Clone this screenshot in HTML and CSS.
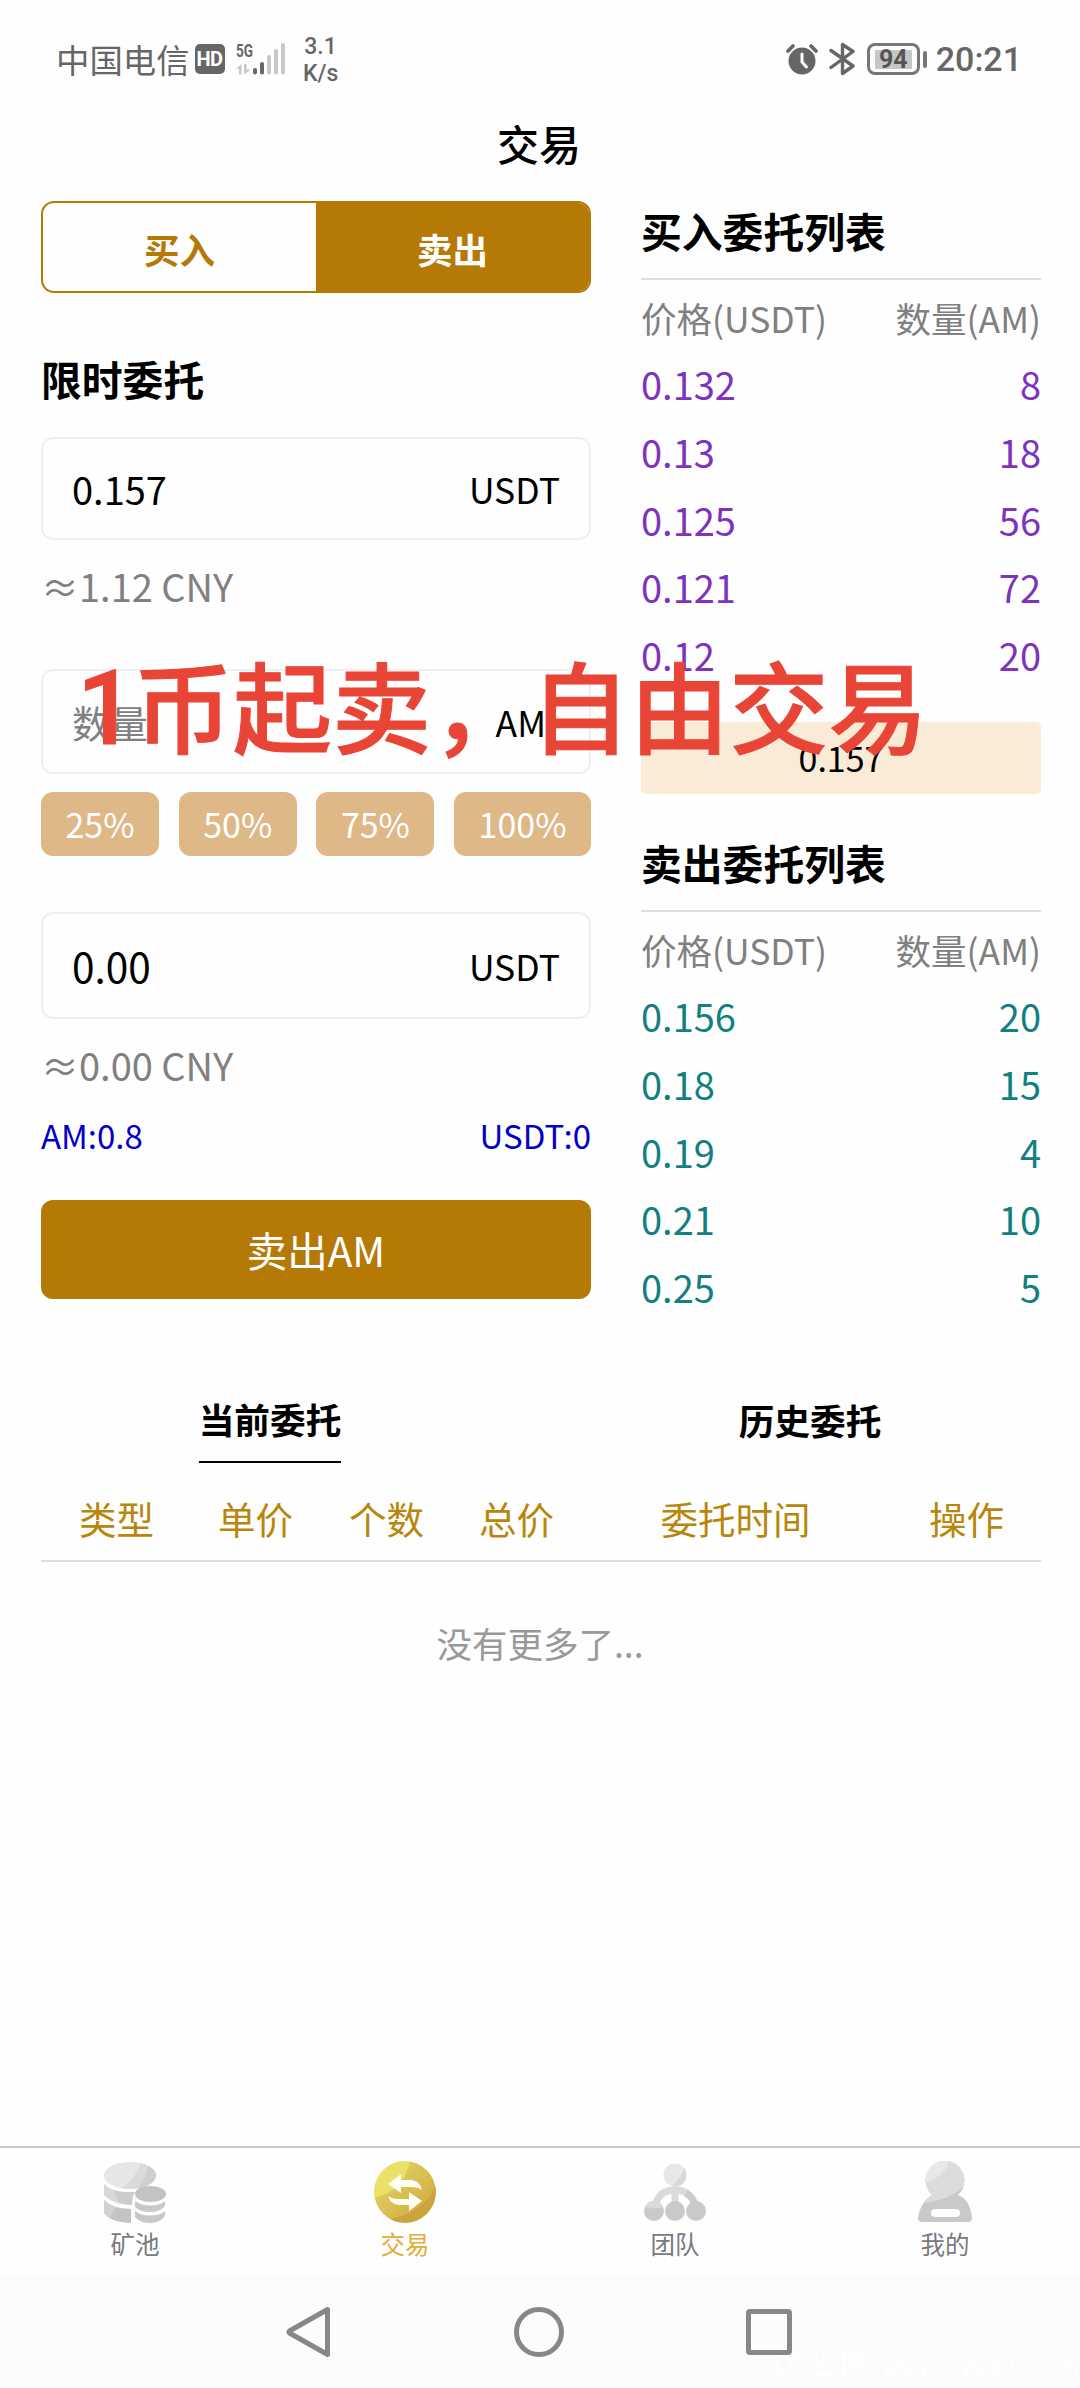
FILE: index.html
```html
<!DOCTYPE html>
<html lang="zh-CN">
<head>
<meta charset="utf-8">
<title>交易</title>
<link rel="stylesheet" href="styles.css">
</head>
<body>
<div class="page">
  <header class="status">
    <div class="status-left">
      <span class="carrier">中国电信</span>
      <span class="hd">HD</span>
      <svg class="signal" width="50" height="32" viewBox="0 0 50 32">
        <text class="signal-5g" x="0" y="14" textLength="17" lengthAdjust="spacingAndGlyphs">5G</text>
        <g fill="#c8c8c8">
          <path d="M0 26l5.500-5v10.500h-2.500v-5.500zM8 21h2.500v5.500h4.500l-7 5z"/>
          <rect x="31" y="12" width="4" height="19.500" rx="2"/>
          <rect x="38" y="6" width="4" height="25.500" rx="2"/>
          <rect x="45" y="0" width="4" height="31.500" rx="2"/>
        </g>
        <g fill="#666">
          <rect x="17" y="25" width="4" height="6.500" rx="2"/>
          <rect x="24" y="19" width="4" height="12.500" rx="2"/>
        </g>
      </svg>
      <span class="speed">3.1<br>K/s</span>
    </div>
    <div class="status-right">
      <svg width="32" height="32" viewBox="0 0 32 32">
        <circle cx="16" cy="18" r="13.500" fill="#666"/>
        <path d="M2 8l5-5M30 8l-5-5" stroke="#666" stroke-width="3.600" stroke-linecap="round"/>
        <path d="M16 11v8l4.500 5" fill="none" stroke="#fff" stroke-width="3" stroke-linecap="round"/>
      </svg>
      <svg class="bluetooth" width="26" height="34" viewBox="0 0 26 34">
        <path d="M2 8.500L24 24L13.500 31.500V2.500L24 9.500L2 25.500" fill="none" stroke="#666" stroke-width="3.400" stroke-linejoin="round" stroke-linecap="round"/>
      </svg>
      <div class="battery"><span>94</span></div>
      <span class="battery-cap"></span>
      <span class="clock">20:21</span>
    </div>
  </header>

  <h1 class="title">交易</h1>

  <main class="trade">
    <section class="order">
      <div class="side-toggle">
        <button class="side">买入</button>
        <button class="side side-active">卖出</button>
      </div>
      <h2 class="order-title">限时委托</h2>
      <div class="field field-price"><span class="field-value">0.157</span><span>USDT</span></div>
      <p class="approx">≈1.12 CNY</p>
      <div class="field field-amount"><span class="field-hint">数量</span><span>AM</span></div>
      <div class="chips">
        <button class="chip">25%</button>
        <button class="chip">50%</button>
        <button class="chip">75%</button>
        <button class="chip">100%</button>
      </div>
      <div class="field field-total"><span class="field-sum">0.00</span><span>USDT</span></div>
      <p class="approx">≈0.00 CNY</p>
      <div class="balances"><span>AM:0.8</span><span>USDT:0</span></div>
      <button class="submit">卖出AM</button>
    </section>

    <section class="books">
      <div class="book book-buy">
        <h2 class="book-title">买入委托列表</h2>
        <div class="book-head"><span>价格(USDT)</span><span>数量(AM)</span></div>
        <div class="book-row"><span>0.132</span><span>8</span></div>
        <div class="book-row"><span>0.13</span><span>18</span></div>
        <div class="book-row"><span>0.125</span><span>56</span></div>
        <div class="book-row"><span>0.121</span><span>72</span></div>
        <div class="book-row"><span>0.12</span><span>20</span></div>
      </div>
      <div class="last-price">0.157</div>
      <div class="book book-sell">
        <h2 class="book-title">卖出委托列表</h2>
        <div class="book-head"><span>价格(USDT)</span><span>数量(AM)</span></div>
        <div class="book-row"><span>0.156</span><span>20</span></div>
        <div class="book-row"><span>0.18</span><span>15</span></div>
        <div class="book-row"><span>0.19</span><span>4</span></div>
        <div class="book-row"><span>0.21</span><span>10</span></div>
        <div class="book-row"><span>0.25</span><span>5</span></div>
      </div>
    </section>
  </main>

  <section class="records">
    <div class="record-tabs">
      <span class="record-tab record-tab-active">当前委托</span>
      <span class="record-tab record-tab-history">历史委托</span>
    </div>
    <div class="record-head">
      <span>类型</span><span>单价</span><span>个数</span><span>总价</span><span>委托时间</span><span>操作</span>
    </div>
    <p class="empty">没有更多了...</p>
  </section>

  <nav class="tabbar">
    <a class="tab">
      <svg width="62" height="62" viewBox="0 0 62 62">
        <defs>
          <clipPath id="coin-top"><ellipse cx="26" cy="14.500" rx="26" ry="13.500"/></clipPath>
        </defs>
        <g clip-path="url(#coin-top)">
          <rect width="62" height="30" fill="#e6e6e6"/>
          <path d="M37 0Q33 17 15 30H62V0z" fill="#dadada"/>
          <path d="M45 0Q43 16 32 30H62V0z" fill="#cfcfcf"/>
        </g>
        <path d="M0 23Q8 31.500 26 31.500L31 31Q28 34 28 44Q8 43 0 34z" fill="#d8d8d8"/>
        <path d="M10 29Q16 31.500 31 31Q28 34 28 44Q20 43.500 15 42z" fill="#ccc"/>
        <path d="M0 39Q8 47.500 27 48V62Q6 61 0 52z" fill="#c4c4c4"/>
        <path d="M0 39Q5 44 12 46L6 57Q1 54 0 52z" fill="#d2d2d2"/>
        <ellipse cx="46.500" cy="33" rx="15.500" ry="8" fill="#c3c3c3"/>
        <path d="M31 40Q37 44.500 46 44.500Q56 44.500 61 40V45Q56 51 46 51Q36 51 31 46zM31 50Q37 54.500 46 54.500Q56 54.500 61 50V55Q56 62 46 62Q36 62 31 56z" fill="#c8c8c8"/>
      </svg>
      <span>矿池</span>
    </a>
    <a class="tab tab-active">
      <svg width="62" height="62" viewBox="0 0 62 62">
        <defs>
          <linearGradient id="gold" x1="0" y1="0" x2="1" y2="1">
            <stop offset="0" stop-color="#e4d966"/><stop offset="1" stop-color="#cca63e"/>
          </linearGradient>
          <clipPath id="gold-disc"><circle cx="31" cy="31" r="30.800"/></clipPath>
        </defs>
        <g clip-path="url(#gold-disc)">
          <rect width="62" height="62" fill="url(#gold)"/>
          <path d="M0 0H36Q29 31 0 37z" fill="#eae168"/>
          <path d="M62 22Q54 50 16 58L22 62H62z" fill="#cda43c"/>
        </g>
        <path d="M14 23L27 13V19H37Q46 20 48 29Q44 26 37 26H27V32zM48 40L35 50V44H25Q16 43 14 35Q18 38 25 38H35V31z" fill="#fffef2"/>
      </svg>
      <span>交易</span>
    </a>
    <a class="tab">
      <svg width="62" height="62" viewBox="0 0 62 62">
        <defs><clipPath id="team-head"><circle cx="31" cy="14" r="11.500"/></clipPath></defs>
        <path d="M11 46Q14 29 31 29Q47 29 52 46M31 26V46" fill="none" stroke="#dadada" stroke-width="7"/>
        <path d="M42 32Q49 36 52 46" fill="none" stroke="#cbcbcb" stroke-width="7"/>
        <g clip-path="url(#team-head)">
          <rect x="19" y="2" width="24" height="24" fill="#e7e7e7"/>
          <path d="M41 4Q38 18 26 26H43z" fill="#d8d8d8"/>
        </g>
        <g fill="#c9c9c9"><circle cx="10" cy="50" r="10"/><circle cx="31" cy="50" r="10"/><circle cx="52" cy="50" r="10"/></g>
        <path d="M1 46A10 10 0 0 1 19 46Q10 49 1 46z" fill="#dadada"/>
      </svg>
      <span>团队</span>
    </a>
    <a class="tab">
      <svg width="62" height="62" viewBox="0 0 62 62">
        <defs>
          <clipPath id="person"><path d="M31 0A19.500 19.500 0 0 1 44 34Q56 38 58 57Q58 61 54 61H8Q4 61 4 57Q6 41 18 34A19.500 19.500 0 0 1 31 0z"/></clipPath>
        </defs>
        <g clip-path="url(#person)">
          <rect width="62" height="62" fill="#c9c9c9"/>
          <path d="M0 0H62V8Q46 40 6 42z" fill="#dcdcdc"/>
          <path d="M0 0H35Q31 16 10 22z" fill="#e8e8e8"/>
        </g>
        <rect x="17" y="48" width="29" height="8" rx="4" fill="#fefefe"/>
      </svg>
      <span>我的</span>
    </a>
  </nav>

  <footer class="sysnav">
    <svg width="56" height="56" viewBox="0 0 56 56"><path d="M46.500 5.500V50.500L8.500 29Q7.500 28 8.500 27z"/></svg>
    <svg width="56" height="56" viewBox="0 0 56 56"><circle cx="28" cy="28" r="22.500"/></svg>
    <svg width="56" height="56" viewBox="0 0 56 56"><rect x="7.500" y="7.500" width="41" height="41" rx="1.500"/></svg>
  </footer>

  <div class="slogan"><span class="slogan-digit">1</span>币起卖，自由交易</div>
  <div class="watermark">i创业网 <span>www.cywzl.com</span></div>
</div>
</body>
</html>
```
FILE: styles.css
```css
* { box-sizing: border-box; }

body {
  margin: 0;
  background: #fefefe;
  color: #000;
  font-family: "Noto Sans CJK SC", sans-serif;
}

h1, h2, p { margin: 0; }

button {
  margin: 0;
  padding: 0;
  border: 0;
  background: none;
  color: inherit;
  font: inherit;
}

.page {
  position: relative;
  display: flex;
  flex-direction: column;
  width: 1080px;
  height: 2388px;
  overflow: hidden;
}

/* status bar */
.status {
  display: flex;
  justify-content: space-between;
  height: 118px;
  padding: 0 58px 0 56px;
  color: #666;
}
.status-left, .status-right { display: flex; align-items: center; }
.carrier { font-size: 33.4px; line-height: 40px; font-weight: 400; }
.hd {
  width: 30px;
  height: 30px;
  margin-left: 5px;
  border-radius: 5px;
  background: #666;
  color: #fff;
  font: 700 20px/31px Roboto, sans-serif;
  letter-spacing: -0.5px;
  text-align: center;
}
.signal { margin-left: 11px; overflow: visible; }
.signal-5g { font: 700 18px Roboto, sans-serif; fill: #666; }
.speed {
  width: 40px;
  margin-left: 15px;
  padding-top: 2px;
  font: 500 23px/27px Roboto, sans-serif;
  text-align: center;
}
.bluetooth { margin-left: 11px; }
.battery {
  width: 53px;
  height: 32px;
  margin-left: 12px;
  padding: 4px 5px;
  border: 3px solid #777;
  border-radius: 8px;
  font: 700 25px/20px Roboto, sans-serif;
  text-align: center;
  color: #555;
}
.battery span { display: block; height: 19px; background: #c6c6c6; }
.battery-cap { width: 4px; height: 17px; margin-left: 3px; border-radius: 2px; background: #777; }
.clock { margin-left: 9px; font: 500 34px/40px Roboto, sans-serif; }

.title {
  font-size: 42px;
  font-weight: 500;
  line-height: 50px;
  text-align: center;
  text-indent: -2px;
}

/* order form and order books */
.trade {
  display: grid;
  grid-template-columns: 550px 400px;
  column-gap: 50px;
  padding: 33px 39px 0 41px;
  height: 1220px;
}

.order { display: flex; flex-direction: column; }
.side-toggle {
  display: grid;
  grid-template-columns: 1fr 1fr;
  height: 92px;
  border: 2px solid #b57906;
  border-radius: 13px;
  overflow: hidden;
}
.side {
  padding-top: 3px;
  color: #b57906;
  font-size: 35.5px;
  font-weight: 700;
}
.side-active { background: #b57906; color: #fff; }
.order-title { margin-top: 56px; font-size: 40.8px; line-height: 60px; }

.field {
  display: flex;
  align-items: center;
  justify-content: space-between;
  padding: 0 29px;
  border: 2px solid #efefef;
  border-radius: 12px;
  font-size: 35.5px;
}
.field-price { height: 103px; margin-top: 28px; padding-bottom: 1px; }
.field-amount { height: 105px; margin-top: 58px; padding: 0 43px 1px 29px; }
.field-total { height: 107px; margin-top: 56px; }
.field-value { font-size: 38px; }
.field-hint { font-size: 38px; color: #808080; }
.field-sum { font-size: 40.5px; }
.approx { margin-top: 21px; font-size: 38px; line-height: 50px; color: #808080; }

.chips { display: flex; justify-content: space-between; margin-top: 18px; }
.chip {
  height: 64px;
  padding: 0 24.5px 2px;
  border-radius: 12px;
  background: #deb887;
  color: #fff;
  font-size: 34px;
}
.balances {
  display: flex;
  justify-content: space-between;
  margin-top: 20px;
  color: #0000cd;
  font-size: 33px;
  line-height: 50px;
}
.submit {
  height: 99px;
  margin-top: 40px;
  border-radius: 12px;
  background: #b57906;
  color: #fff;
  font-size: 40.5px;
}

.book-title {
  height: 79px;
  padding-top: 1px;
  border-bottom: 2px solid #dedede;
  font-size: 40.8px;
  line-height: 57px;
}
.book-head, .book-row { display: flex; justify-content: space-between; }
.book-head {
  height: 70px;
  padding-top: 6px;
  color: #808080;
  font-size: 35.5px;
  line-height: 64px;
}
.book-row { font-size: 38px; line-height: 67.8px; }
.book-buy .book-row { color: #7d33bd; }
.book-sell .book-row { color: #128080; }
.last-price {
  height: 72px;
  margin: 33px 0 39px;
  border-radius: 5px;
  background: #faebd7;
  font-size: 34px;
  line-height: 71px;
  text-align: center;
}

/* order records */
.records { flex: 1; }
.record-tabs { display: grid; grid-template-columns: 1fr 1fr; justify-items: center; }
.record-tab { height: 75px; padding-top: 1px; font-size: 35.7px; font-weight: 700; line-height: 60px; }
.record-tab-active { border-bottom: 2px solid #000; }
.record-tab-history { padding-top: 2px; }
.record-head {
  display: grid;
  grid-template-columns: 151px 127px 135px 125px 313px 149px;
  height: 99px;
  margin: 0 39px 0 41px;
  padding-top: 12px;
  border-bottom: 2px solid #dedede;
  color: #b8860b;
  font-size: 37.5px;
  line-height: 85px;
  text-align: center;
}
.empty {
  margin-top: 56px;
  color: #999;
  font-size: 35.5px;
  line-height: 50px;
  text-align: center;
}

/* bottom navigation */
.tabbar {
  display: grid;
  grid-template-columns: repeat(4, 1fr);
  height: 129px;
  padding-top: 13px;
  border-top: 2px solid #c8c8c8;
}
.tab {
  display: flex;
  flex-direction: column;
  align-items: center;
  gap: 6px;
  color: #777a80;
  font-size: 24.5px;
  line-height: 30px;
}
.tab-active { color: #e6ac35; }

.sysnav {
  display: flex;
  align-items: center;
  gap: 174px;
  height: 113px;
  padding-left: 281px;
  background: #fcfcfc;
}
.sysnav svg { fill: none; stroke: #888; stroke-width: 5; stroke-linejoin: round; }

/* overlays */
.slogan {
  position: absolute;
  left: 77px;
  top: 653px;
  color: #e84537;
  font-size: 99.3px;
  font-weight: 500;
  line-height: 100px;
  white-space: nowrap;
  -webkit-text-stroke: 1px #e84537;
}
.slogan-digit {
  display: inline-block;
  width: 56.5px;
  font-family: Roboto, sans-serif;
  font-size: 103px;
  vertical-align: 2px;
  line-height: 80px;
}
.watermark {
  position: absolute;
  left: 770px;
  top: 2352px;
  color: #fff;
  font: 27px/32px "Liberation Mono", "Noto Sans CJK SC", monospace;
  white-space: nowrap;
}
.watermark span { font-size: 25px; }
```
